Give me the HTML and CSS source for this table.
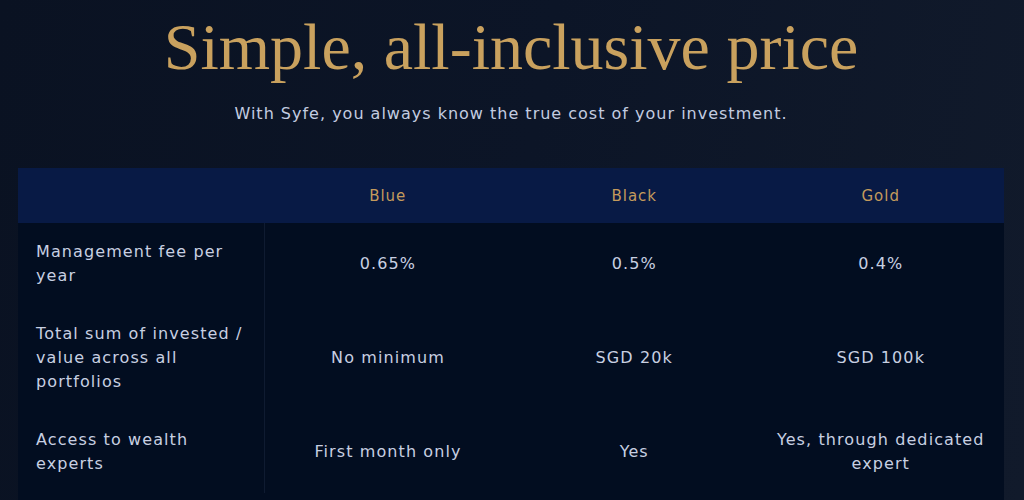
FILE: index.html
```html
<!DOCTYPE html>
<html lang="en">
<head>
<meta charset="utf-8">
<title>Pricing</title>
<link rel="stylesheet" href="styles.css">
</head>
<body>
<section class="pricing">
  <h1 class="title">Simple, all-inclusive price</h1>
  <p class="subtitle">With Syfe, you always know the true cost of your investment.</p>
  <div class="plans-wrap">
    <table class="plans">
      <thead>
        <tr>
          <th class="corner"></th>
          <th>Blue</th>
          <th>Black</th>
          <th>Gold</th>
        </tr>
      </thead>
      <tbody>
        <tr>
          <td class="label">Management fee per year</td>
          <td>0.65%</td>
          <td>0.5%</td>
          <td>0.4%</td>
        </tr>
        <tr>
          <td class="label">Total sum of invested / value across all portfolios</td>
          <td>No minimum</td>
          <td>SGD 20k</td>
          <td>SGD 100k</td>
        </tr>
        <tr>
          <td class="label">Access to wealth experts</td>
          <td>First month only</td>
          <td>Yes</td>
          <td>Yes, through dedicated expert</td>
        </tr>
      </tbody>
    </table>
  </div>
</section>
</body>
</html>
```
FILE: styles.css
```css
html, body {
  margin: 0;
  padding: 0;
}
body {
  background: linear-gradient(100deg, #0a1222 0%, #0c1527 50%, #111a2b 100%);
  min-height: 500px;
  font-family: "DejaVu Sans", sans-serif;
  color: #c8d0e2;
}
.pricing {
  padding: 11px 20px 0 18px;
}
.title {
  margin: 0;
  text-align: center;
  font-family: "Liberation Serif", serif;
  font-weight: normal;
  font-size: 66px;
  line-height: 72px;
  color: #c9a15e;
}
.subtitle {
  margin: 19px 0 0;
  text-align: center;
  font-size: 16px;
  line-height: 24px;
  letter-spacing: 1px;
  color: #c3cce0;
}
.plans-wrap {
  margin-top: 42px;
  background: #020d20;
  padding-bottom: 16px;
}
.plans {
  width: 100%;
  border-collapse: collapse;
  table-layout: fixed;
}
.plans th {
  background: #081a45;
  color: #c49a5c;
  font-weight: normal;
  font-size: 15px;
  letter-spacing: 1px;
  height: 55px;
  padding: 0;
  text-align: center;
}
.plans td {
  padding: 17px 8px;
  font-size: 16px;
  line-height: 24px;
  letter-spacing: 1.1px;
  text-align: center;
  vertical-align: middle;
}
.plans td.label {
  padding: 17px 14px 17px 18px;
  text-align: left;
  border-right: 1px solid #0f1b31;
}
```
